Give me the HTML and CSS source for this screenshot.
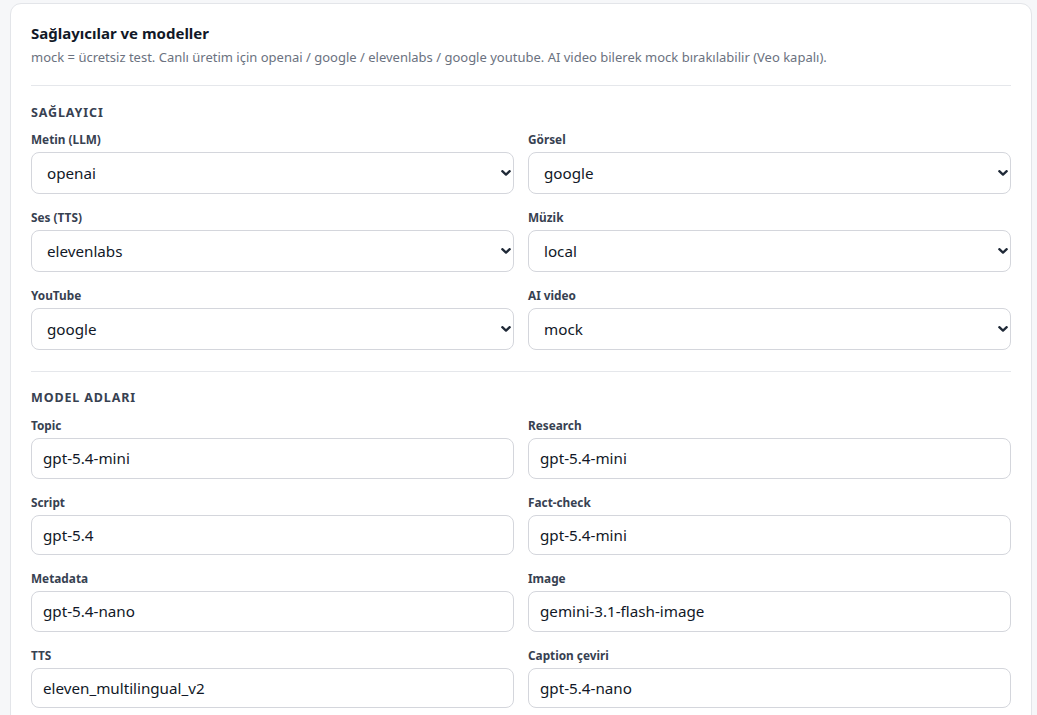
FILE: index.html
```html
<!DOCTYPE html>
<html lang="tr">
<head>
<meta charset="utf-8">
<title>Sağlayıcılar ve modeller</title>
<link rel="stylesheet" href="styles.css">
</head>
<body>
<div class="page">
  <section class="card">
    <header class="card-head">
      <h2 class="title">Sağlayıcılar ve modeller</h2>
      <p class="subtitle">mock = ücretsiz test. Canlı üretim için openai / google / elevenlabs / google youtube. AI video bilerek mock bırakılabilir (Veo kapalı).</p>
    </header>

    <div class="section sec-providers">
      <h3 class="sec-title">SAĞLAYICI</h3>
      <div class="grid grid-select">
        <label class="field"><span class="lbl">Metin (LLM)</span>
          <span class="sel-wrap"><select class="sel"><option>openai</option></select><svg class="chev" viewBox="0 0 10 6"><path d="M1.3 1.2 L5 4.6 L8.7 1.2"/></svg></span></label>
        <label class="field"><span class="lbl">Görsel</span>
          <span class="sel-wrap"><select class="sel"><option>google</option></select><svg class="chev" viewBox="0 0 10 6"><path d="M1.3 1.2 L5 4.6 L8.7 1.2"/></svg></span></label>
        <label class="field"><span class="lbl">Ses (TTS)</span>
          <span class="sel-wrap"><select class="sel"><option>elevenlabs</option></select><svg class="chev" viewBox="0 0 10 6"><path d="M1.3 1.2 L5 4.6 L8.7 1.2"/></svg></span></label>
        <label class="field"><span class="lbl">Müzik</span>
          <span class="sel-wrap"><select class="sel"><option>local</option></select><svg class="chev" viewBox="0 0 10 6"><path d="M1.3 1.2 L5 4.6 L8.7 1.2"/></svg></span></label>
        <label class="field"><span class="lbl">YouTube</span>
          <span class="sel-wrap"><select class="sel"><option>google</option></select><svg class="chev" viewBox="0 0 10 6"><path d="M1.3 1.2 L5 4.6 L8.7 1.2"/></svg></span></label>
        <label class="field"><span class="lbl">AI video</span>
          <span class="sel-wrap"><select class="sel"><option>mock</option></select><svg class="chev" viewBox="0 0 10 6"><path d="M1.3 1.2 L5 4.6 L8.7 1.2"/></svg></span></label>
      </div>
    </div>

    <div class="section sec-models">
      <h3 class="sec-title">MODEL ADLARI</h3>
      <div class="grid grid-input">
        <label class="field"><span class="lbl">Topic</span><input class="inp" value="gpt-5.4-mini"></label>
        <label class="field"><span class="lbl">Research</span><input class="inp" value="gpt-5.4-mini"></label>
        <label class="field"><span class="lbl">Script</span><input class="inp" value="gpt-5.4"></label>
        <label class="field"><span class="lbl">Fact-check</span><input class="inp" value="gpt-5.4-mini"></label>
        <label class="field"><span class="lbl">Metadata</span><input class="inp" value="gpt-5.4-nano"></label>
        <label class="field"><span class="lbl">Image</span><input class="inp" value="gemini-3.1-flash-image"></label>
        <label class="field"><span class="lbl">TTS</span><input class="inp" value="eleven_multilingual_v2"></label>
        <label class="field"><span class="lbl">Caption çeviri</span><input class="inp" value="gpt-5.4-nano"></label>
      </div>
    </div>
  </section>
</div>
</body>
</html>
```

FILE: styles.css
```css
* { box-sizing: border-box; }

html, body {
  margin: 0;
  padding: 0;
  background: #f6f7f9;
  font-family: "Noto Sans", "Open Sans", "Liberation Sans", sans-serif;
  color: #111827;
}

.page {
  padding: 3px 5px 0 10px;
}

.card {
  background: #ffffff;
  border: 1px solid #e3e5e9;
  border-radius: 11px;
  padding: 19px 20px 40px 20px;
}

.card-head {
  padding-bottom: 19px;
  border-bottom: 1px solid #e5e7eb;
}

.title {
  margin: 0;
  font-size: 15px;
  line-height: 20px;
  font-weight: 700;
  color: #111827;
}

.subtitle {
  margin: 5px 0 0 0;
  font-size: 13px;
  line-height: 18px;
  color: #6b7280;
}

.section {
  padding-top: 18px;
}

.sec-providers {
  padding-top: 19px;
  padding-bottom: 21px;
  border-bottom: 1px solid #e5e7eb;
}

.sec-title {
  margin: 0 0 11px 0;
  font-size: 12.5px;
  line-height: 16px;
  font-weight: 700;
  letter-spacing: 0.07em;
  color: #374151;
}

.sec-providers .sec-title {
  margin-bottom: 10px;
}

.grid {
  display: grid;
  grid-template-columns: 1fr 1fr;
  column-gap: 14px;
  row-gap: 15px;
}

.field {
  display: flex;
  flex-direction: column;
}

.lbl {
  font-size: 11.8px;
  line-height: 16px;
  font-weight: 700;
  color: #374151;
  margin-bottom: 5px;
}

.sel-wrap {
  position: relative;
  display: block;
}

.sel {
  appearance: none;
  -webkit-appearance: none;
  width: 100%;
  height: 42px;
  margin: 0;
  padding: 0 30px 0 15px;
  border: 1px solid #d4d6dc;
  border-radius: 8px;
  background: #ffffff;
  font-family: inherit;
  font-size: 15.2px;
  color: #111827;
}

.chev {
  position: absolute;
  right: 3px;
  top: 18px;
  width: 10px;
  height: 6px;
  fill: none;
  stroke: #1f2937;
  stroke-width: 2.3;
  stroke-linecap: round;
  stroke-linejoin: round;
  pointer-events: none;
}

.inp {
  width: 100%;
  height: 40.5px;
  margin: 0;
  padding: 0 11px;
  border: 1px solid #d4d6dc;
  border-radius: 8px;
  background: #ffffff;
  font-family: inherit;
  font-size: 15.2px;
  color: #111827;
}
```
